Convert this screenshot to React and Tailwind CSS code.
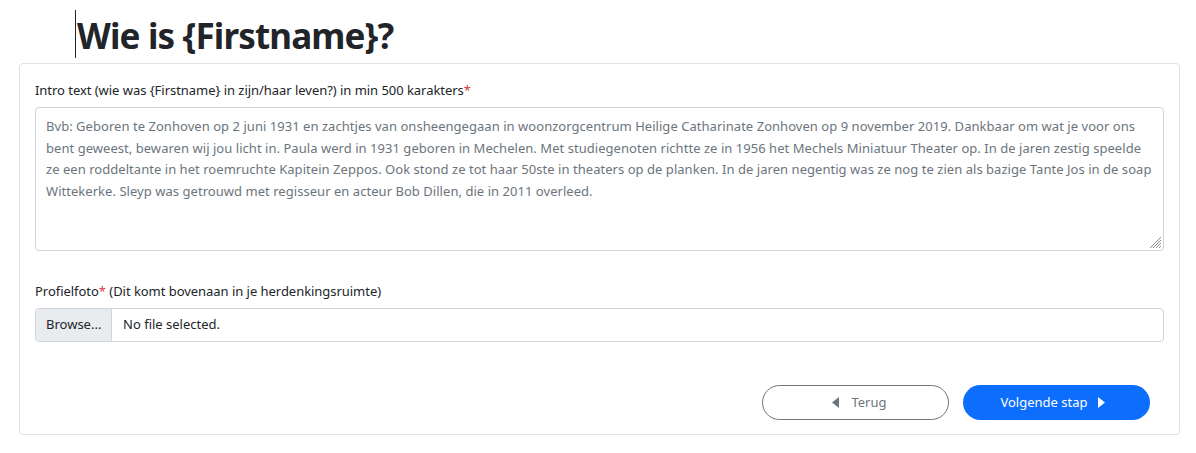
export default function App() {
  const font = { fontFamily: '"Noto Sans", "Open Sans", sans-serif' };
  const placeholder =
    "Bvb: Geboren te Zonhoven op 2 juni 1931 en zachtjes van onsheengegaan in woonzorgcentrum Heilige Catharinate Zonhoven op 9 november 2019. Dankbaar om wat je voor ons\n" +
    "bent geweest, bewaren wij jou licht in. Paula werd in 1931 geboren in Mechelen. Met studiegenoten richtte ze in 1956 het Mechels Miniatuur Theater op. In de jaren zestig speelde\n" +
    "ze een roddeltante in het roemruchte Kapitein Zeppos. Ook stond ze tot haar 50ste in theaters op de planken. In de jaren negentig was ze nog te zien als bazige Tante Jos in de soap\n" +
    "Wittekerke. Sleyp was getrouwd met regisseur en acteur Bob Dillen, die in 2011 overleed.";
  return (
    <div className="w-[1196px] h-[453px] bg-white text-[#212529]" style={font}>
      <div className="flex items-center h-[63px] pl-[75px] pt-[5px]">
        <span className="w-px h-[48px] bg-[#212529] mr-[1px]"></span>
        <h1 className="text-[35px] font-bold leading-none tracking-[-0.85px] pt-[2px]">Wie is {'{Firstname}'}?</h1>
      </div>
      <div className="ml-[19px] w-[1161px] border border-[#dee2e6] rounded-[4px] px-[15px] pt-[16px] pb-[14px]">
        <label className="block text-[13px] leading-[20px] mb-[7px] tracking-[-0.04px]">
          Intro text (wie was {'{Firstname}'} in zijn/haar leven?) in min 500 karakters<span className="text-[#dc3545]">*</span>
        </label>
        <div className="relative">
          <textarea
            className="block w-full h-[144px] border border-[#ced4da] rounded-[4px] pl-[10px] pr-[4px] py-[8px] text-[13px] leading-[21.6px] tracking-[0.04px] placeholder:text-[#6c757d] text-[#6c757d] resize-none outline-none whitespace-pre-wrap"
            placeholder={placeholder}
          ></textarea>
          <svg className="absolute right-[3px] bottom-[3px]" width="12" height="12" viewBox="0 0 12 12">
            <g stroke="#8a8a8a" strokeWidth="1">
              <line x1="12" y1="1" x2="1" y2="12" />
              <line x1="12" y1="4" x2="4" y2="12" />
              <line x1="12" y1="7" x2="7" y2="12" />
              <line x1="12" y1="10" x2="10" y2="12" />
            </g>
          </svg>
        </div>
        <label className="block text-[13px] leading-[20px] mt-[30px] mb-[7px] tracking-[-0.04px]">
          Profielfoto<span className="text-[#dc3545]">*</span> (Dit komt bovenaan in je herdenkingsruimte)
        </label>
        <div className="flex h-[34px] border border-[#ced4da] rounded-[4px] overflow-hidden text-[13px]">
          <div className="flex items-center px-[10px] bg-[#e9ecef] border-r border-[#ced4da] w-[76px]">Browse...</div>
          <div className="flex items-center px-[11px]">No file selected.</div>
        </div>
        <div className="flex justify-end gap-[14px] mt-[43px] pr-[14px]">
          <button className="flex items-center justify-center gap-[12px] w-[187px] h-[35px] pl-[8px] rounded-full border border-[#6c757d] text-[#6c757d] text-[13px]">
            <svg width="7" height="11" viewBox="0 0 7 11"><path d="M7 0 L0 5.5 L7 11 Z" fill="#6c757d" /></svg>
            Terug
          </button>
          <button className="flex items-center justify-center gap-[10px] w-[187px] h-[35px] pr-[8px] rounded-full bg-[#0d6efd] text-white text-[13px]">
            Volgende stap
            <svg width="7" height="11" viewBox="0 0 7 11"><path d="M0 0 L7 5.5 L0 11 Z" fill="#fff" /></svg>
          </button>
        </div>
      </div>
    </div>
  );
}
